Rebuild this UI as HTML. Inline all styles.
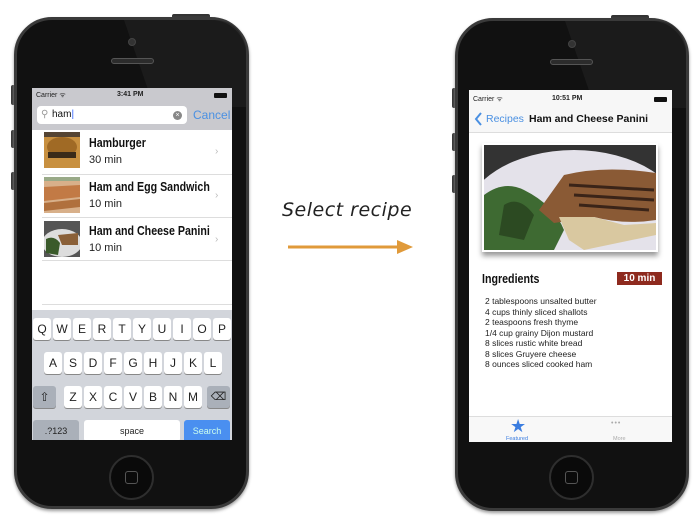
<!DOCTYPE html>
<html><head><style>
*{margin:0;padding:0;box-sizing:border-box}
body{width:700px;height:532px;background:#fff;position:relative;overflow:hidden;font-family:"Liberation Sans",Arial,sans-serif}
.a{position:absolute;white-space:nowrap}
.phone{position:absolute;border-radius:38px;background:#111;border:3px solid #3a3a3a;box-shadow:0 2px 3px #999}
.btn{position:absolute;background:#333;border-radius:2px}
.screen{position:absolute;overflow:hidden;background:#fff}
.key{position:absolute;background:#fff;border-radius:3px;box-shadow:0 1px 0 #888;font-size:12px;color:#222;text-align:center;line-height:22px;width:18px;height:22px}
.gk{background:#aab0b9;}
.t{position:absolute;white-space:nowrap;font-weight:bold;font-size:13px;color:#111;transform:scaleX(0.82);transform-origin:0 0}
</style></head><body>

<!-- LEFT PHONE -->
<div class="btn" style="left:172px;top:14px;width:38px;height:5px"></div>
<div class="btn" style="left:11px;top:85px;width:4px;height:20px"></div>
<div class="btn" style="left:11px;top:130px;width:4px;height:18px"></div>
<div class="btn" style="left:11px;top:172px;width:4px;height:18px"></div>
<div class="phone" style="left:14px;top:17px;width:235px;height:492px"></div>
<svg class="a" style="left:14px;top:17px" width="235" height="492"><path d="M110 3 L140 90 L232 90 L232 30 Q225 3 200 3Z" fill="#1f1f1f" opacity=".7"/></svg>
<div class="a" style="left:128px;top:38px;width:8px;height:8px;border-radius:50%;background:#333;border:1px solid #444"></div>
<div class="a" style="left:111px;top:58px;width:43px;height:6px;border-radius:3px;background:#2c2c2c;border:1px solid #555"></div>
<div class="a" style="left:109px;top:455px;width:45px;height:45px;border-radius:50%;background:#0a0a0a;border:2px solid #2e2e2e"></div>
<div class="a" style="left:125px;top:471px;width:13px;height:13px;border-radius:3px;border:1.5px solid #555"></div>

<div class="screen" style="left:32px;top:88px;width:200px;height:352px">
  <div class="a" style="left:0;top:0;width:200px;height:42px;background:#c9c9ce"></div>
  <div class="a" style="left:4px;top:3px;font-size:7px;color:#222">Carrier ᯤ</div>
  <div class="a" style="left:85px;top:3px;font-size:7px;font-weight:bold;color:#222">3:41 PM</div>
  <div class="a" style="left:182px;top:5px;width:13px;height:5px;background:#111;border-radius:1px"></div>
  <div class="a" style="left:5px;top:18px;width:150px;height:18px;background:#fff;border-radius:4px"></div>
  <div class="a" style="left:9px;top:21px;font-size:10px;color:#999">⚲</div>
  <div class="a" style="left:20px;top:21px;font-size:10px;color:#111">ham<span style="color:#36f">|</span></div>
  <div class="a" style="left:141px;top:23px;width:9px;height:9px;border-radius:50%;background:#888;color:#fff;font-size:7px;line-height:9px;text-align:center">×</div>
  <div class="a" style="left:161px;top:20px;font-size:12px;color:#4a90e2">Cancel</div>

  <svg class="a" style="left:12px;top:44px" width="36" height="36"><rect width="36" height="36" fill="#c89040"/><ellipse cx="18" cy="15" rx="15" ry="10" fill="#a06a25"/><rect x="4" y="20" width="28" height="6" fill="#3a2a18"/><rect y="0" width="36" height="5" fill="#543"/></svg>
  <div class="t" style="left:57px;top:47px">Hamburger</div>
  <div class="a" style="left:57px;top:66px;font-size:11px;color:#222">30 min</div>
  <div class="a" style="left:183px;top:58px;font-size:10px;color:#bbb">›</div>
  <div class="a" style="left:10px;top:86px;width:190px;height:1px;background:#ddd"></div>

  <svg class="a" style="left:12px;top:89px" width="36" height="36"><rect width="36" height="36" fill="#d8b08a"/><path d="M0 10 L36 8 L36 20 L0 24Z" fill="#c27a45"/><path d="M0 26 L36 22 L36 30 L0 34Z" fill="#b0703d"/><rect width="36" height="4" fill="#9a8"/></svg>
  <div class="t" style="left:57px;top:91px">Ham and Egg Sandwich</div>
  <div class="a" style="left:57px;top:110px;font-size:11px;color:#222">10 min</div>
  <div class="a" style="left:183px;top:102px;font-size:10px;color:#bbb">›</div>
  <div class="a" style="left:10px;top:129px;width:190px;height:1px;background:#ddd"></div>

  <svg class="a" style="left:12px;top:133px" width="36" height="36"><rect width="36" height="36" fill="#555"/><ellipse cx="18" cy="22" rx="20" ry="14" fill="#ddd"/><path d="M2 18 Q10 14 16 22 L14 34 L2 32Z" fill="#3a5a2a"/><path d="M14 14 L34 12 L34 24 L18 24Z" fill="#8a6038"/></svg>
  <div class="t" style="left:57px;top:135px">Ham and Cheese Panini</div>
  <div class="a" style="left:57px;top:154px;font-size:11px;color:#222">10 min</div>
  <div class="a" style="left:183px;top:146px;font-size:10px;color:#bbb">›</div>
  <div class="a" style="left:10px;top:172px;width:190px;height:1px;background:#ddd"></div>
  <div class="a" style="left:10px;top:216px;width:190px;height:1px;background:#ddd"></div>

  <div class="a" style="left:0;top:222px;width:200px;height:130px;background:#d2d5db"></div>
  <div class="key" style="left:1px;top:230px">Q</div><div class="key" style="left:21px;top:230px">W</div><div class="key" style="left:41px;top:230px">E</div><div class="key" style="left:61px;top:230px">R</div><div class="key" style="left:81px;top:230px">T</div><div class="key" style="left:101px;top:230px">Y</div><div class="key" style="left:121px;top:230px">U</div><div class="key" style="left:141px;top:230px">I</div><div class="key" style="left:161px;top:230px">O</div><div class="key" style="left:181px;top:230px">P</div>
  <div class="key" style="left:12px;top:264px">A</div><div class="key" style="left:32px;top:264px">S</div><div class="key" style="left:52px;top:264px">D</div><div class="key" style="left:72px;top:264px">F</div><div class="key" style="left:92px;top:264px">G</div><div class="key" style="left:112px;top:264px">H</div><div class="key" style="left:132px;top:264px">J</div><div class="key" style="left:152px;top:264px">K</div><div class="key" style="left:172px;top:264px">L</div>
  <div class="key gk" style="left:1px;top:298px;width:23px">⇧</div>
  <div class="key" style="left:32px;top:298px">Z</div><div class="key" style="left:52px;top:298px">X</div><div class="key" style="left:72px;top:298px">C</div><div class="key" style="left:92px;top:298px">V</div><div class="key" style="left:112px;top:298px">B</div><div class="key" style="left:132px;top:298px">N</div><div class="key" style="left:152px;top:298px">M</div>
  <div class="key gk" style="left:175px;top:298px;width:23px;font-size:11px">⌫</div>
  <div class="key gk" style="left:1px;top:332px;width:46px;font-size:9px">.?123</div>
  <div class="key" style="left:52px;top:332px;width:96px;font-size:9px">space</div>
  <div class="key" style="left:152px;top:332px;width:46px;font-size:9px;background:#4a8ff0;color:#cfe">Search</div>
</div>

<!-- MIDDLE -->
<div class="a" style="left:282px;top:199px;font-family:'DejaVu Sans',sans-serif;font-style:italic;font-size:19px;color:#222;letter-spacing:0.5px">Select recipe</div>
<svg class="a" style="left:285px;top:238px" width="132" height="20"><line x1="3" y1="9" x2="118" y2="9" stroke="#e09a3a" stroke-width="3"/><path d="M112 2 L128 9 L112 16Z" fill="#e09a3a"/></svg>

<!-- RIGHT PHONE -->
<div class="btn" style="left:611px;top:15px;width:38px;height:5px"></div>
<div class="btn" style="left:452px;top:88px;width:4px;height:20px"></div>
<div class="btn" style="left:452px;top:133px;width:4px;height:18px"></div>
<div class="btn" style="left:452px;top:175px;width:4px;height:18px"></div>
<div class="phone" style="left:455px;top:18px;width:234px;height:493px"></div>
<svg class="a" style="left:455px;top:18px" width="234" height="493"><path d="M110 3 L140 90 L231 90 L231 30 Q225 3 200 3Z" fill="#1f1f1f" opacity=".7"/></svg>
<div class="a" style="left:568px;top:40px;width:8px;height:8px;border-radius:50%;background:#333;border:1px solid #444"></div>
<div class="a" style="left:550px;top:59px;width:43px;height:6px;border-radius:3px;background:#2c2c2c;border:1px solid #555"></div>
<div class="a" style="left:549px;top:455px;width:45px;height:45px;border-radius:50%;background:#0a0a0a;border:2px solid #2e2e2e"></div>
<div class="a" style="left:565px;top:471px;width:13px;height:13px;border-radius:3px;border:1.5px solid #555"></div>

<div class="screen" style="left:469px;top:90px;width:203px;height:352px">
  <div class="a" style="left:0;top:0;width:203px;height:43px;background:#f7f7f7;border-bottom:1px solid #ddd"></div>
  <div class="a" style="left:4px;top:5px;font-size:7px;color:#222">Carrier ᯤ</div>
  <div class="a" style="left:83px;top:5px;font-size:7px;font-weight:bold;color:#222">10:51 PM</div>
  <div class="a" style="left:185px;top:7px;width:13px;height:5px;background:#111;border-radius:1px"></div>
  <svg class="a" style="left:5px;top:22px" width="9" height="14"><path d="M7 1 L2 7 L7 13" stroke="#4a90e2" stroke-width="2" fill="none"/></svg>
  <div class="a" style="left:17px;top:23px;font-size:10.5px;color:#4a90e2">Recipes</div>
  <div class="a" style="left:60px;top:23px;font-size:10.5px;font-weight:bold;color:#111">Ham and Cheese Panini</div>

  <div class="a" style="left:13px;top:53px;width:176px;height:109px;box-shadow:0 4px 5px #999;background:#fff;padding:2px">
  <svg width="172" height="105"><rect width="172" height="105" fill="#333"/><ellipse cx="90" cy="75" rx="110" ry="70" fill="#e4e2ea"/><path d="M0 50 Q20 35 40 45 Q70 60 80 85 L70 105 L0 105Z" fill="#3e6a32"/><path d="M20 60 Q35 50 50 70 L40 95 L15 90Z" fill="#2c4a22"/><path d="M55 65 L80 30 Q120 20 172 28 L172 75 Q140 80 110 72 L70 78Z" fill="#8a5a35"/><path d="M75 72 L110 72 L140 80 L172 78 L172 90 L100 105 L85 95Z" fill="#d9c8a0"/><path d="M85 40 L170 45 M90 50 L170 55 M95 60 L165 65" stroke="#3a2418" stroke-width="3"/></svg>
  </div>

  <div class="t" style="left:13px;top:181px;font-size:13px">Ingredients</div>
  <div class="a" style="left:148px;top:182px;width:45px;height:13px;background:#8e2a1e;color:#fff;font-size:10px;font-weight:bold;text-align:center;line-height:13px">10 min</div>
  <div class="a" style="left:16px;top:206px;font-size:8.5px;color:#222;line-height:10.5px">2 tablespoons unsalted butter<br>4 cups thinly sliced shallots<br>2 teaspoons fresh thyme<br>1/4 cup grainy Dijon mustard<br>8 slices rustic white bread<br>8 slices Gruyere cheese<br>8 ounces sliced cooked ham</div>

  <div class="a" style="left:0;top:326px;width:203px;height:26px;background:#f8f8f8;border-top:1px solid #ddd"></div>
  <div class="a" style="left:41px;top:326px;font-size:18px;color:#3b7de0">★</div>
  <div class="a" style="left:37px;top:346px;font-size:5.5px;color:#3b7de0">Featured</div>
  <div class="a" style="left:142px;top:330px;font-size:7px;color:#aaa;letter-spacing:1px">•••</div>
  <div class="a" style="left:144px;top:346px;font-size:5.5px;color:#aaa">More</div>
</div>
</body></html>
